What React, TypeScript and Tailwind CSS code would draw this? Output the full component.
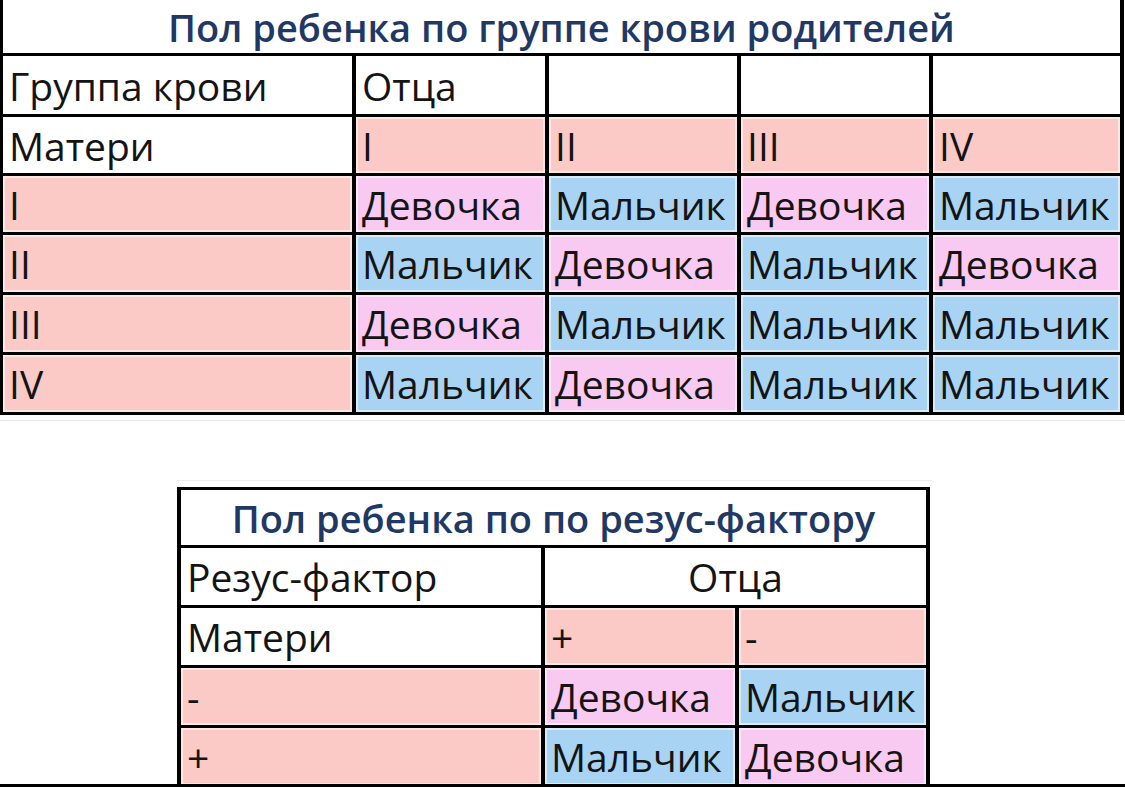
const FONT = "font-['Open_Sans','Noto_Sans',sans-serif]";

const SALMON = "bg-[#fbcac6]";
const GIRL = "bg-[#f8c9f1]";
const BOY = "bg-[#a9d3f2]";
const WHITE = "bg-white";

const rim = "shadow-[inset_0_0_0_2px_rgba(255,255,255,0.55)]";

function Cell({
  text,
  bg,
  center,
  className = "",
}: {
  text?: string;
  bg: string;
  center?: boolean;
  className?: string;
}) {
  return (
    <div
      className={`${bg} ${bg === WHITE ? "" : rim} ${className} flex items-center ${
        center ? "justify-center" : "pl-[6px]"
      } overflow-hidden whitespace-nowrap text-[39px] leading-none text-[#141414]`}
    >
      {text}
    </div>
  );
}

const sex = (s: string) => (s === "Д" ? { text: "Девочка", bg: GIRL } : { text: "Мальчик", bg: BOY });

const bloodRows = [
  { mother: "I", kids: ["Д", "М", "Д", "М"] },
  { mother: "II", kids: ["М", "Д", "М", "Д"] },
  { mother: "III", kids: ["Д", "М", "М", "М"] },
  { mother: "IV", kids: ["М", "Д", "М", "М"] },
];

const titleCls =
  "flex items-center justify-center bg-white text-[38px] font-semibold leading-none text-[#1f3864]";

function BloodTable() {
  return (
    <div className="w-[1124px] border-x-[3px] border-r-[4px] border-b-[3px] border-black bg-black">
      <div className={`${titleCls} h-[53px]`}>Пол ребенка по группе крови родителей</div>
      <div className="grid grid-cols-[349px_189px_188px_188px_187px] grid-rows-[58px_56px_56px_57px_57px_57px] gap-x-[4px] gap-y-[3px] pt-[3px]">
        <Cell text="Группа крови" bg={WHITE} />
        <Cell text="Отца" bg={WHITE} />
        <Cell bg={WHITE} />
        <Cell bg={WHITE} />
        <Cell bg={WHITE} />

        <Cell text="Матери" bg={WHITE} />
        <Cell text="I" bg={SALMON} />
        <Cell text="II" bg={SALMON} />
        <Cell text="III" bg={SALMON} />
        <Cell text="IV" bg={SALMON} />

        {bloodRows.map((r) => [
          <Cell key={r.mother} text={r.mother} bg={SALMON} />,
          ...r.kids.map((k, i) => <Cell key={r.mother + i} {...sex(k)} />),
        ])}
      </div>
    </div>
  );
}

function RhesusTable() {
  return (
    <div className="ml-[177px] w-[753px] border-x-[4px] border-t-[3px] border-black bg-black">
      <div className={`${titleCls} h-[55px]`}>Пол ребенка по по резус-фактору</div>
      <div className="grid grid-cols-[360px_190px_187px] grid-rows-[57px_57px_57px_57px] gap-x-[4px] gap-y-[3px] pt-[3px]">
        <Cell text="Резус-фактор" bg={WHITE} />
        <Cell text="Отца" bg={WHITE} center className="col-span-2" />

        <Cell text="Матери" bg={WHITE} />
        <Cell text="+" bg={SALMON} />
        <Cell text="-" bg={SALMON} />

        <Cell text="-" bg={SALMON} />
        <Cell {...sex("Д")} />
        <Cell {...sex("М")} />

        <Cell text="+" bg={SALMON} />
        <Cell {...sex("М")} />
        <Cell {...sex("Д")} />
      </div>
    </div>
  );
}

export default function App() {
  return (
    <div className={`${FONT} flex h-[787px] w-[1125px] flex-col overflow-hidden bg-white`}>
      <div className="flex-1 overflow-hidden">
        <BloodTable />
        <div className="mt-[5px] h-px w-full bg-[#e6e6e6]" />
        <div className="ml-[177px] mt-[59px] h-px w-[755px] bg-[#ececec]" />
        <div className="mt-[6px]">
          <RhesusTable />
        </div>
      </div>
      <div className="h-[3px] w-full bg-black" />
    </div>
  );
}
